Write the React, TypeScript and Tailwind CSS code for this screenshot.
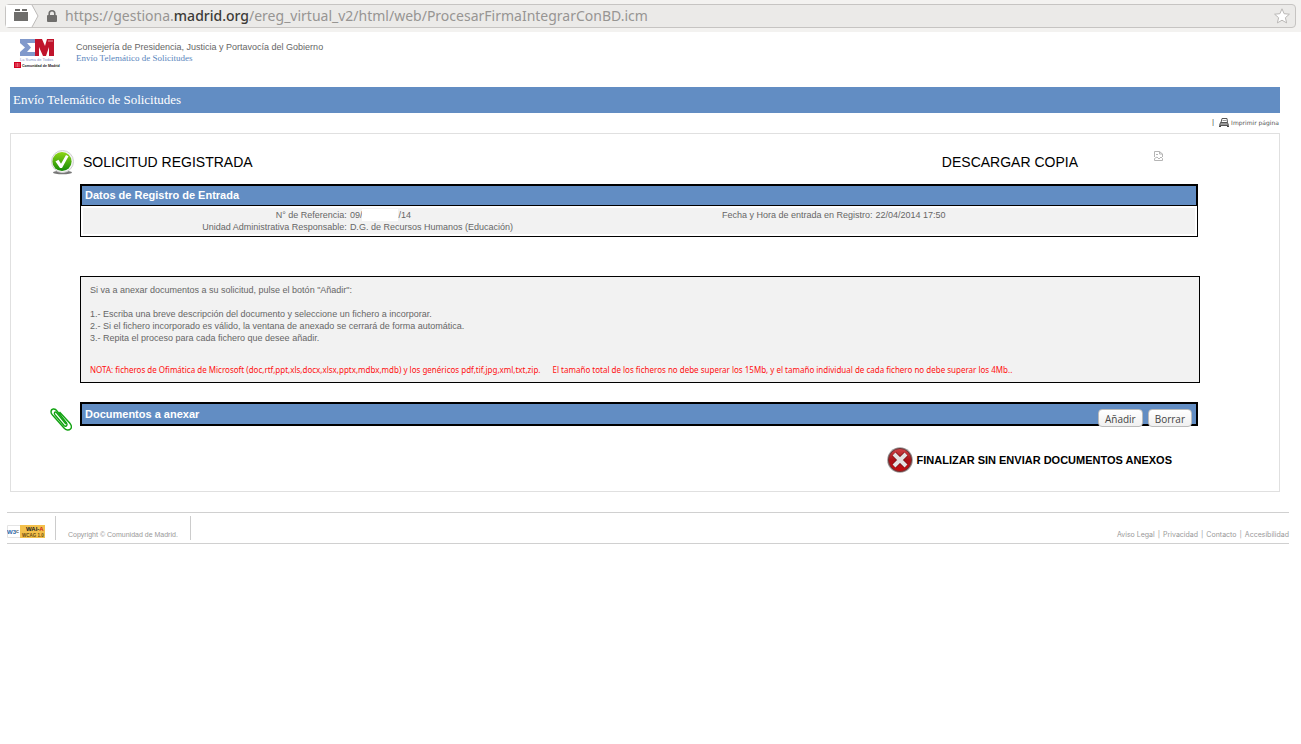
import type { ReactNode } from "react";

function ExtensionIcon() {
  return (
    <svg width="14" height="12" viewBox="0 0 14 12" aria-hidden="true">
      <path d="M0 3h14v9H0z" fill="#6f6e6c" />
      <path d="M1 0h5v2H1zM8 0h5v2H8z" fill="#6f6e6c" />
    </svg>
  );
}

function LockIcon() {
  return (
    <svg width="10" height="12" viewBox="0 0 10 12" aria-hidden="true">
      <path d="M2.2 6V3.6a2.8 2.8 0 0 1 5.6 0V6" fill="none" stroke="#6f6e6c" strokeWidth="1.6" />
      <rect x="0" y="5" width="10" height="7" rx="1" fill="#6f6e6c" />
    </svg>
  );
}

function StarIcon() {
  return (
    <svg width="18" height="18" viewBox="0 0 18 18" aria-hidden="true">
      <path
        d="M9 1.8l2.1 4.9 5.3.5-4 3.5 1.2 5.2L9 13.2l-4.6 2.7 1.2-5.2-4-3.5 5.3-.5z"
        fill="#fff"
        stroke="#bab8b6"
        strokeLinejoin="round"
      />
    </svg>
  );
}

function MadridLogo() {
  return (
    <svg width="47" height="32" viewBox="0 0 47 32" role="img" aria-label="Comunidad de Madrid">
      <path d="M6 2h15v4h-8l4 4.500-4 4.500h8v4H6v-4l5-4.500-5-4.500z" fill="#8199cb" />
      <path d="M21 2h7l3 7 2-7h7v17h-5v-9l-3 9h-3l-4-9v9h-4z" fill="#c0142c" />
      <path d="M34 4h5" stroke="#e79aa4" strokeWidth="1" />
      <text x="6" y="24" fontSize="4" fill="#7f93c9" fontFamily="Liberation Sans, sans-serif">
        La Suma de Todos
      </text>
      <path d="M0 25h7v6H0z" fill="#d4001f" />
      <path d="M1.5 27h4M1.5 29h4" stroke="#fff" strokeWidth="0.8" strokeDasharray="1 0.5" />
      <text x="8" y="30" fontSize="3.6" fontWeight="bold" fill="#222" fontFamily="Liberation Sans, sans-serif">
        Comunidad de Madrid
      </text>
    </svg>
  );
}

function PrinterIcon() {
  return (
    <svg width="10" height="9" viewBox="0 0 10 9" aria-hidden="true">
      <path d="M2 4.5L3 .5h5l.5 4" fill="#fff" stroke="#555" />
      <path d="M3.5 2.5h4" stroke="#999" />
      <path d="M1.5 4.5h7l1 3h-9z" fill="#999" stroke="#555" />
      <path d="M0 8.5h2M8 8.5h2" stroke="#444" />
    </svg>
  );
}

function CheckBadge() {
  return (
    <svg width="24" height="25" viewBox="0 0 24 25" aria-hidden="true">
      <defs>
        <linearGradient id="check-fill" x1="0" y1="0" x2="0" y2="1">
          <stop offset="0" stopColor="#8fd616" />
          <stop offset="1" stopColor="#138a06" />
        </linearGradient>
      </defs>
      <ellipse cx="11.5" cy="22.5" rx="9.5" ry="1.8" fill="#777" />
      <circle cx="11.5" cy="11.5" r="11" fill="#f4f4f4" stroke="#d0d0d0" />
      <circle cx="11" cy="11.5" r="9.6" fill="url(#check-fill)" />
      <path d="M4.5 11.5l3-1.8 2.5 4L15 5l2.5 1.2L11 18H9z" fill="#fff" />
    </svg>
  );
}

function CrossBadge() {
  return (
    <svg width="26" height="26" viewBox="0 0 26 26" aria-hidden="true">
      <defs>
        <linearGradient id="cross-fill" x1="0" y1="0" x2="0" y2="1">
          <stop offset="0" stopColor="#cf4448" />
          <stop offset="0.5" stopColor="#a91217" />
          <stop offset="1" stopColor="#c50d10" />
        </linearGradient>
      </defs>
      <circle cx="13" cy="13" r="12.8" fill="#999" />
      <circle cx="13" cy="13" r="11.5" fill="url(#cross-fill)" stroke="#6b3436" />
      <path d="M7 7l12 12M19 7L7 19" stroke="#7d1013" strokeWidth="5.5" />
      <path d="M7 7l12 12M19 7L7 19" stroke="#e4e2e2" strokeWidth="4" />
    </svg>
  );
}

function ClipIcon() {
  return (
    <svg width="22" height="23" viewBox="0 0 22 23" fill="none" stroke="#12a312" strokeWidth="1.4" aria-hidden="true">
      <path d="M5 7l9 10.5c1.5 1.5 4 .2 2.5-2.500L7 3C5 0 1 .5 1 4c0 1 .5 2 1.500 3L14 20c2 2.500 5 2.500 6.500 1s.8-4-.8-6L9.500 4" />
      <path d="M5 7C3.5 5 5 3 6.5 4.5L16 16" />
    </svg>
  );
}

function BrokenImageIcon() {
  return (
    <svg width="9" height="10" viewBox="0 0 9 10" fill="none" stroke="#b5b5b5" aria-hidden="true">
      <path d="M.5 6V.5h5L8.500 3v3M5.500.5V3h3" />
      <path d="M.5 7.5v2h8v-2L7 6 5 8 3 6z" />
      <path d="M2 4l1-1 1 1" />
    </svg>
  );
}

function WaiBadge() {
  return (
    <svg width="38" height="13" viewBox="0 0 38 13" role="img" aria-label="W3C WAI-A WCAG 1.0">
      <path d="M.5.5h37v12H.5z" fill="#fff" stroke="#e4e4e4" />
      <path d="M13 0h25v13H13z" fill="#f3c04b" />
      <g fontFamily="Liberation Sans, sans-serif" fontWeight="bold">
        <text x="0" y="9" fontSize="6" fill="#2a66a8">W3</text>
        <text x="9" y="8" fontSize="4" fill="#333">C</text>
        <text x="19" y="6" fontSize="6" fill="#222">
          WAI-<tspan fill="#c22">A</tspan>
        </text>
        <text x="15" y="12" fontSize="4.5" fill="#6a4c10">WCAG 1.0</text>
      </g>
    </svg>
  );
}

function BrowserBar() {
  return (
    <div className="flex h-8 items-start bg-[#f3f2f0] px-[5px] pt-1">
      <div className="flex h-6 w-full items-center rounded border border-[#c6c4c2] bg-[#ebeae8] pr-1">
        <svg width="33" height="22" viewBox="0 0 33 22" className="shrink-0" aria-hidden="true">
          <path d="M0 0h26l6 11-6 11H0z" fill="#fff" />
          <path d="M26 0l6 11-6 11" fill="none" stroke="#bcbab8" />
          <g transform="translate(8 4)">
            <ExtensionIcon />
          </g>
        </svg>
        <span className="ml-2">
          <LockIcon />
        </span>
        <div
          role="textbox"
          tabIndex={0}
          aria-label="Dirección"
          className="ml-2 grow whitespace-nowrap font-['Noto_Sans','Open_Sans',sans-serif] text-[14px] leading-5 text-[#979593]"
        >
          https://gestiona.<span className="font-medium text-[#3c3b37]">madrid.org</span>
          /ereg_virtual_v2/html/web/ProcesarFirmaIntegrarConBD.icm
        </div>
        <button type="button" aria-label="Añadir a marcadores">
          <StarIcon />
        </button>
      </div>
    </div>
  );
}

function SmallButton({ children }: { children: ReactNode }) {
  return (
    <button
      type="button"
      className="h-[18px] rounded border border-[#bbb] bg-linear-to-b from-white to-[#f0f0f0] px-[6px] pt-px font-['Open_Sans',sans-serif] text-[10px] leading-4 text-[#444]"
    >
      {children}
    </button>
  );
}

const footerLinks = ["Aviso Legal", "Privacidad", "Contacto", "Accesibilidad"];

export default function App() {
  return (
    <div className="min-h-screen bg-white font-['Liberation_Sans',Arial,sans-serif] text-[#666]">
      <BrowserBar />

      <header className="ml-[14px] mt-[5px] flex gap-[15px]">
        <MadridLogo />
        <div className="pt-[5px] text-[9px] leading-[11px]">
          <p>Consejería de Presidencia, Justicia y Portavocía del Gobierno</p>
          <p className="font-['Liberation_Serif',serif] text-[#5a86bd]">Envío Telemático de Solicitudes</p>
        </div>
      </header>

      <main className="ml-[10px] mr-[21px] mt-[18px]">
        <h1 className="bg-[#628dc3] px-[3px] font-['Liberation_Serif',serif] text-[13px] leading-[26px] text-white">
          Envío Telemático de Solicitudes
        </h1>

        <div className="mb-[2px] flex h-[18px] items-center justify-end gap-[5px] pr-px text-[6px] text-[#555]">
          <span className="text-[8px]">|</span>
          <a href="#imprimir" className="flex items-center gap-[2px] font-['DejaVu_Sans',sans-serif]">
            <PrinterIcon />
            Imprimir página
          </a>
        </div>

        <div className="border border-[#e0e0e0] pb-[18px] pl-10 pr-[81px] pt-4">
          <div className="flex h-6 items-center text-[14px] text-black">
            <CheckBadge />
            <h2 className="ml-2">SOLICITUD REGISTRADA</h2>
            <h2 className="ml-auto">DESCARGAR COPIA</h2>
            <a href="#copia" aria-label="Descargar copia" className="ml-[76px] mr-[35px] self-start pt-px">
              <BrokenImageIcon />
            </a>
          </div>

          <section className="ml-[29px] mt-[10px]">
            <h3 className="border-2 border-b border-black bg-[#628dc3] px-[3px] text-[11px] font-bold leading-[19px] text-white">
              Datos de Registro de Entrada
            </h3>
            <div className="border border-t-0 border-black p-[2px]">
              <div className="bg-[#f2f2f2] py-px">
                <table className="w-full table-fixed text-[9px] leading-[12px]">
                  <colgroup>
                    <col className="w-[24%]" />
                    <col className="w-[26%]" />
                    <col className="w-[21%]" />
                    <col className="w-[29%]" />
                  </colgroup>
                  <tbody>
                    <tr>
                      <th scope="row" className="pr-[3px] text-right font-normal">N° de Referencia:</th>
                      <td>
                        09/<span className="inline-block h-3 w-[36px] bg-white align-top" />/14
                      </td>
                      <th scope="row" className="text-right font-normal whitespace-nowrap">
                        Fecha y Hora de entrada en Registro:
                      </th>
                      <td className="pl-[3px]">22/04/2014 17:50</td>
                    </tr>
                    <tr>
                      <th scope="row" className="pr-[3px] text-right font-normal">
                        Unidad Administrativa Responsable:
                      </th>
                      <td colSpan={3}>D.G. de Recursos Humanos (Educación)</td>
                    </tr>
                  </tbody>
                </table>
              </div>
            </div>
          </section>

          <section className="-mr-[2px] ml-[29px] mt-[39px] border border-black bg-[#f2f2f2] px-[9px] pb-[6px] pt-[7px] text-[9px] leading-[12px]">
            <p>Si va a anexar documentos a su solicitud, pulse el botón "Añadir":</p>
            <div className="mt-3">
              <p>1.- Escriba una breve descripción del documento y seleccione un fichero a incorporar.</p>
              <p>2.- Si el fichero incorporado es válido, la ventana de anexado se cerrará de forma automática.</p>
              <p>3.- Repita el proceso para cada fichero que desee añadir.</p>
            </div>
            <p className="mt-5 flex gap-3 whitespace-nowrap font-['Noto_Sans',sans-serif] text-[8px] text-[#ff1010]">
              <span>
                NOTA: ficheros de Ofimática de Microsoft (doc,rtf,ppt,xls,docx,xlsx,pptx,mdbx,mdb) y los genéricos
                pdf,tif,jpg,xml,txt,zip.
              </span>
              <span>
                El tamaño total de los ficheros no debe superar los 15Mb, y el tamaño individual de cada fichero no debe
                superar los 4Mb..
              </span>
            </p>
          </section>

          <section className="mt-[19px] flex h-6 items-start">
            <span className="-ml-px mt-[6px] w-[30px] shrink-0">
              <ClipIcon />
            </span>
            <div className="flex h-6 grow items-start border-2 border-black bg-[#628dc3] pl-[3px] pr-1">
              <h3 className="grow text-[11px] font-bold leading-5 text-white">Documentos a anexar</h3>
              <div className="flex gap-[5px] pt-[5px]">
                <SmallButton>Añadir</SmallButton>
                <SmallButton>Borrar</SmallButton>
              </div>
            </div>
          </section>

          <div className="mt-[21px] flex justify-end pr-[26px]">
            <button type="button" className="flex items-center gap-[4px] text-[11px] font-bold text-black">
              <CrossBadge />
              FINALIZAR SIN ENVIAR DOCUMENTOS ANEXOS
            </button>
          </div>
        </div>
      </main>

      <footer className="ml-[7px] mr-3 mt-5 flex h-8 items-start border-y border-[#d0d0d0] text-[7px] text-[#999]">
        <span className="mt-3">
          <WaiBadge />
        </span>
        <p className="ml-[10px] mt-[3px] h-6 border-x border-[#ccc] px-3 pt-[14px] leading-[10px]">
          Copyright © Comunidad de Madrid.
        </p>
        <nav
          aria-label="Pie de página"
          className="ml-auto mt-[17px] flex gap-[3px] font-[Inter,sans-serif] leading-[10px]"
        >
          {footerLinks.map((label, i) => (
            <span key={label} className="flex gap-[3px]">
              {i > 0 && <span>|</span>}
              <a href="#pie">{label}</a>
            </span>
          ))}
        </nav>
      </footer>
    </div>
  );
}
